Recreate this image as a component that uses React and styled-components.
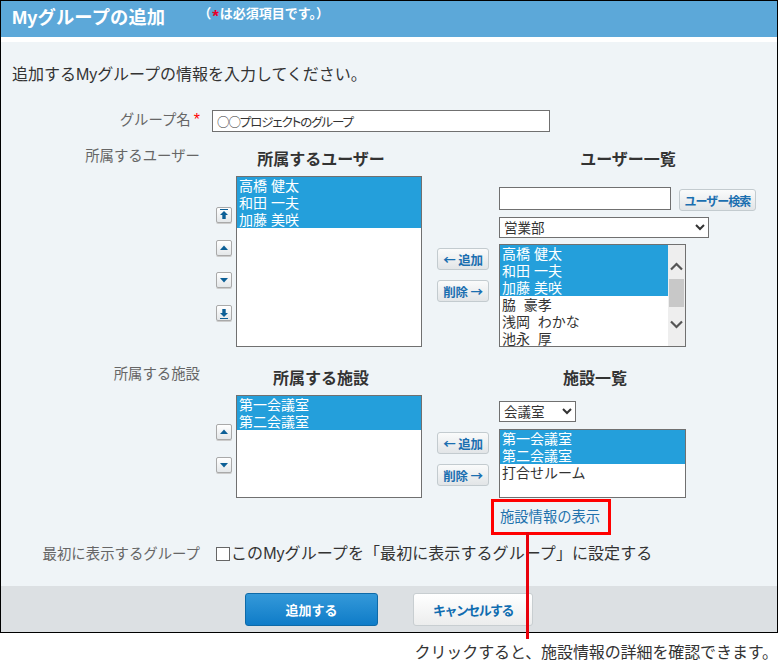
import React from "react";
import styled, { createGlobalStyle } from "styled-components";

const Global = createGlobalStyle`
  html, body { margin: 0; padding: 0; background: #fff; }
  body { font-family: "Liberation Sans", "Noto Sans CJK JP", sans-serif; color: #333; }
  * { box-sizing: border-box; }
`;

const Page = styled.div`width: 778px; height: 672px; overflow: hidden;`;
const Frame = styled.div`border: 1px solid #000; height: 633px; display: flex; flex-direction: column; background: #fff;`;
const Header = styled.header`
  height: 36px; background: #5ca8d9; color: #fff; display: flex; align-items: flex-start; padding-left: 11px;
`;
const Title = styled.h1`margin: 3px 0 0; font-size: 18.3px; line-height: 28px; font-weight: 700; letter-spacing: 0.1px;`;
const Note = styled.span`margin: 4px 0 0 33px; font-size: 13px; line-height: 18px; font-weight: 700; letter-spacing: 0; white-space: nowrap;`;
const NoteStar = styled.b`color: #e8002a; font-size: 17px; font-weight: 700; line-height: 18px; margin: 0 1px 0 1px; vertical-align: -4px;`;
const Star = styled.span`color: #f00; font-size: 16px; line-height: 15px; margin-left: 3px;`;
const Body = styled.main`flex: 1; margin-top: 5px; background: #eff4f7; padding-left: 0; display: flex; flex-direction: column;`;
const Intro = styled.p`margin: 21px 0 0 11px; font-size: 16px; line-height: 24px; letter-spacing: -0.03px;`;

const Row = styled.div`display: flex; align-items: flex-start; margin-top: ${(p) => p.$mt}px;`;
const Label = styled.div`
  width: 199px; flex: none; text-align: right; color: #666; font-size: 14.4px; line-height: 20px; margin-top: ${(p) => p.$pt || 0}px;
`;
const NameInput = styled.input`
  margin-left: 12px; width: 338px; height: 22px; border: 1px solid #707070; background: #fff; padding: 0 4px;
  font: 12.5px "Noto Sans CJK JP", sans-serif; font-feature-settings: "palt"; color: #333; letter-spacing: -1.1px; outline: none;
`;
const Section = styled.section`display: flex; align-items: flex-start; margin-left: 16px;`;
const Mover = styled.div`
  width: 16px; flex: none; display: flex; flex-direction: column; gap: ${(p) => p.$gap}px; margin-top: ${(p) => p.$top}px;
`;
const MoveBtn = styled.button`
  width: 16px; height: 16px; padding: 0; display: flex; align-items: center; justify-content: center;
  border: 1px solid #a9a9a9; border-radius: 2px; background: linear-gradient(#fff, #e4e7e9); box-shadow: 0 1px 0 #ccc;
`;
const Col = styled.div`width: 186px; flex: none; margin-left: 4px;`;
const Heading = styled.h2`
  margin: 0; height: 24px; font-size: 16px; line-height: 24px; font-weight: 700; text-align: center; color: #333;
  margin-bottom: ${(p) => p.$mb}px; width: ${(p) => p.$w || "auto"}; padding-right: ${(p) => p.$pr || 0}px;
`;
const ListBox = styled.div`
  width: ${(p) => p.$w || 186}px; height: ${(p) => p.$h}px; border: 1px solid #707070; background: #fff; position: relative; overflow: hidden; display: flex;
`;
const Items = styled.ul`list-style: none; margin: 0; padding: 0; flex: 1; min-width: 0;`;
const Item = styled.li`
  height: 17px; line-height: 19px; font-size: 14px; padding-left: 2px; white-space: pre; letter-spacing: 0; overflow: hidden;
  background: ${(p) => (p.$on ? "#249fdb" : "transparent")}; color: ${(p) => (p.$on ? "#fff" : "#333")};
`;
const Scrollbar = styled.div`width: 17px; flex: none; background: #eee; display: flex; flex-direction: column; align-items: center; position: relative;`;
const Thumb = styled.div`position: absolute; left: 1px; right: 1px; top: 34px; height: 28px; background: #c8c8c8;`;
const ScrollArrow = styled.svg`position: absolute; left: 2px; top: ${(p) => p.$top}px;`;
const Transfer = styled.div`
  width: 52px; flex: none; margin-left: 15px; display: flex; flex-direction: column; gap: 10px; margin-top: ${(p) => p.$top}px;
`;
const TransferBtn = styled.button`
  width: 52px; height: 22px; padding: 0; border: 1px solid #c3cbcf; border-radius: 3px; background: linear-gradient(#fafbfb, #e2e5e7);
  color: #1b6fb0; font: 700 12.5px "Noto Sans CJK JP", sans-serif; white-space: nowrap; letter-spacing: -0.2px;
`;
const Right = styled.div`margin-left: 10px; width: 258px; flex: none;`;
const SearchRow = styled.div`display: flex; align-items: flex-start; gap: 8px;`;
const SearchInput = styled.input`width: 172px; height: 23px; border: 1px solid #707070; background: #fff; outline: none;`;
const SearchBtn = styled(TransferBtn)`width: 77px; margin-top: 2px; font-size: 12px; letter-spacing: -1px;`;
const Pick = styled.select`
  display: block; width: ${(p) => p.$w}px; height: 21px; margin: ${(p) => p.$mt}px 0 ${(p) => p.$mb}px; border: 1px solid #707070; border-radius: 0; background: #fff;
  font: 13.5px "Liberation Sans", "Noto Sans CJK JP", sans-serif; color: #333; padding: 1px 0 0;
`;
const LinkBox = styled.div`
  position: relative; margin: 1px 0 0 -8px; width: 120px; height: 36px; border: 3px solid #f00; display: flex; align-items: center; padding-left: 6px;
`;
const Link = styled.a`color: #2272ad; font-size: 14.3px; line-height: 20px; white-space: nowrap;`;
const Leader = styled.div`position: absolute; left: 32px; top: 100%; width: 3px; height: 107px; background: #e8000b; margin-top: 0; z-index: 2;`;
const CheckWrap = styled.label`display: flex; align-items: center; margin-left: 16px; font-size: 16px; line-height: 24px; color: #333; letter-spacing: 0.07px;`;
const Check = styled.input`appearance: none; width: 14px; height: 14px; margin: 0 1px 0 0; border: 1px solid #666; background: #fff;`;
const Footer = styled.footer`height: 46px; background: #dce0e3; display: flex; align-items: flex-start; padding: 7px 0 0 244px; gap: 35px;`;
const Primary = styled.button`
  width: 133px; height: 33px; border: 1px solid #0e6aa8; border-radius: 3px; background: linear-gradient(#3499d9, #0f7cc8);
  color: #fff; font: 700 13px "Liberation Sans", "Noto Sans CJK JP", sans-serif;
`;
const Cancel = styled.button`
  width: 120px; height: 33px; border: 1px solid #c8ced1; border-radius: 3px; background: linear-gradient(#fff, #eceded);
  color: #0f6cb0; font: 700 13px "Liberation Sans", "Noto Sans CJK JP", sans-serif; letter-spacing: -1.6px;
`;
const Caption = styled.div`margin-top: 8px; text-align: right; padding-right: 0; font-size: 16px; line-height: 24px; color: #333; letter-spacing: -0.1px; white-space: nowrap;`;

const Glyph = ({ d, top, bottom }) => (
  <svg width="10" height="12" viewBox="0 0 10 12" fill="#0c5f96">
    {top && <rect x="1" y="0" width="8" height="1" />}
    {bottom && <rect x="1" y="11" width="8" height="1" />}
    <path d={d} />
  </svg>
);
const UP = "M5 3.5 9 8H1Z";
const DOWN = "M1 4h8L5 8.5Z";
const TOP = "M5 2 9 6H6.7V10H3.3V6H1Z";
const BOT = "M3.3 2H6.7V6H9L5 10 1 6H3.3Z";

const Chevron = ({ up, top }) => (
  <ScrollArrow $top={top} width="13" height="9" viewBox="0 0 13 9" fill="none" stroke="#555" strokeWidth="2.2">
    <path d={up ? "M1 7.5 6.5 2 12 7.5" : "M1 1.5 6.5 7 12 1.5"} />
  </ScrollArrow>
);

const selectedUsers = ["高橋 健太", "和田 一夫", "加藤 美咲"];
const otherUsers = ["脇  豪孝", "浅岡  わかな", "池永  厚"];
const rooms = ["第一会議室", "第二会議室"];

export default function App() {
  return (
    <Page>
      <Global />
      <Frame>
        <Header>
          <Title>Myグループの追加</Title>
          <Note>（<NoteStar>*</NoteStar>は必須項目です。）</Note>
        </Header>
        <Body>
          <Intro>追加するMyグループの情報を入力してください。</Intro>
          <Row $mt={23}>
            <Label>グループ名<Star>*</Star></Label>
            <NameInput readOnly defaultValue="○○プロジェクトのグループ" />
          </Row>
          <Row $mt={16}>
            <Label $pt={-2}>所属するユーザー</Label>
            <Section>
              <Mover $top={59} $gap={16.6}>
                <MoveBtn><Glyph d={TOP} top /></MoveBtn>
                <MoveBtn><Glyph d={UP} /></MoveBtn>
                <MoveBtn><Glyph d={DOWN} /></MoveBtn>
                <MoveBtn><Glyph d={BOT} bottom /></MoveBtn>
              </Mover>
              <Col>
                <Heading $mb={4} $pr={16}>所属するユーザー</Heading>
                <ListBox $h={171}>
                  <Items>{selectedUsers.map((u) => <Item $on key={u}>{u}</Item>)}</Items>
                </ListBox>
              </Col>
              <Transfer $top={100}>
                <TransferBtn>← 追加</TransferBtn>
                <TransferBtn>削除 →</TransferBtn>
              </Transfer>
              <Right>
                <Heading $mb={15}>ユーザー一覧</Heading>
                <SearchRow>
                  <SearchInput />
                  <SearchBtn>ユーザー検索</SearchBtn>
                </SearchRow>
                <Pick $w={210} $mt={6} $mb={6}><option>営業部</option></Pick>
                <ListBox $w={187} $h={103}>
                  <Items>
                    {selectedUsers.map((u) => <Item $on key={u}>{u}</Item>)}
                    {otherUsers.map((u) => <Item key={u}>{u}</Item>)}
                  </Items>
                  <Scrollbar>
                    <Chevron up top={17} />
                    <Thumb />
                    <Chevron top={75} />
                  </Scrollbar>
                </ListBox>
              </Right>
            </Section>
          </Row>
          <Row $mt={20}>
            <Label $pt={-3}>所属する施設</Label>
            <Section>
              <Mover $top={57} $gap={17}>
                <MoveBtn><Glyph d={UP} /></MoveBtn>
                <MoveBtn><Glyph d={DOWN} /></MoveBtn>
              </Mover>
              <Col>
                <Heading $mb={4} $pr={16}>所属する施設</Heading>
                <ListBox $h={103}>
                  <Items>{rooms.map((r) => <Item $on key={r}>{r}</Item>)}</Items>
                </ListBox>
              </Col>
              <Transfer $top={65}>
                <TransferBtn>← 追加</TransferBtn>
                <TransferBtn>削除 →</TransferBtn>
              </Transfer>
              <Right>
                <Heading $mb={10} $w="192px">施設一覧</Heading>
                <Pick $w={77} $mt={0} $mb={7}><option>会議室</option></Pick>
                <ListBox $w={187} $h={69}>
                  <Items>
                    {rooms.map((r) => <Item $on key={r}>{r}</Item>)}
                    <Item>打合せルーム</Item>
                  </Items>
                </ListBox>
                <LinkBox>
                  <Link>施設情報の表示</Link>
                  <Leader />
                </LinkBox>
              </Right>
            </Section>
          </Row>
          <Row $mt={7}>
            <Label $pt={2}>最初に表示するグループ</Label>
            <CheckWrap>
              <Check type="checkbox" />
              このMyグループを「最初に表示するグループ」に設定する
            </CheckWrap>
          </Row>
        </Body>
        <Footer>
          <Primary>追加する</Primary>
          <Cancel>キャンセルする</Cancel>
        </Footer>
      </Frame>
      <Caption>クリックすると、施設情報の詳細を確認できます。</Caption>
    </Page>
  );
}
